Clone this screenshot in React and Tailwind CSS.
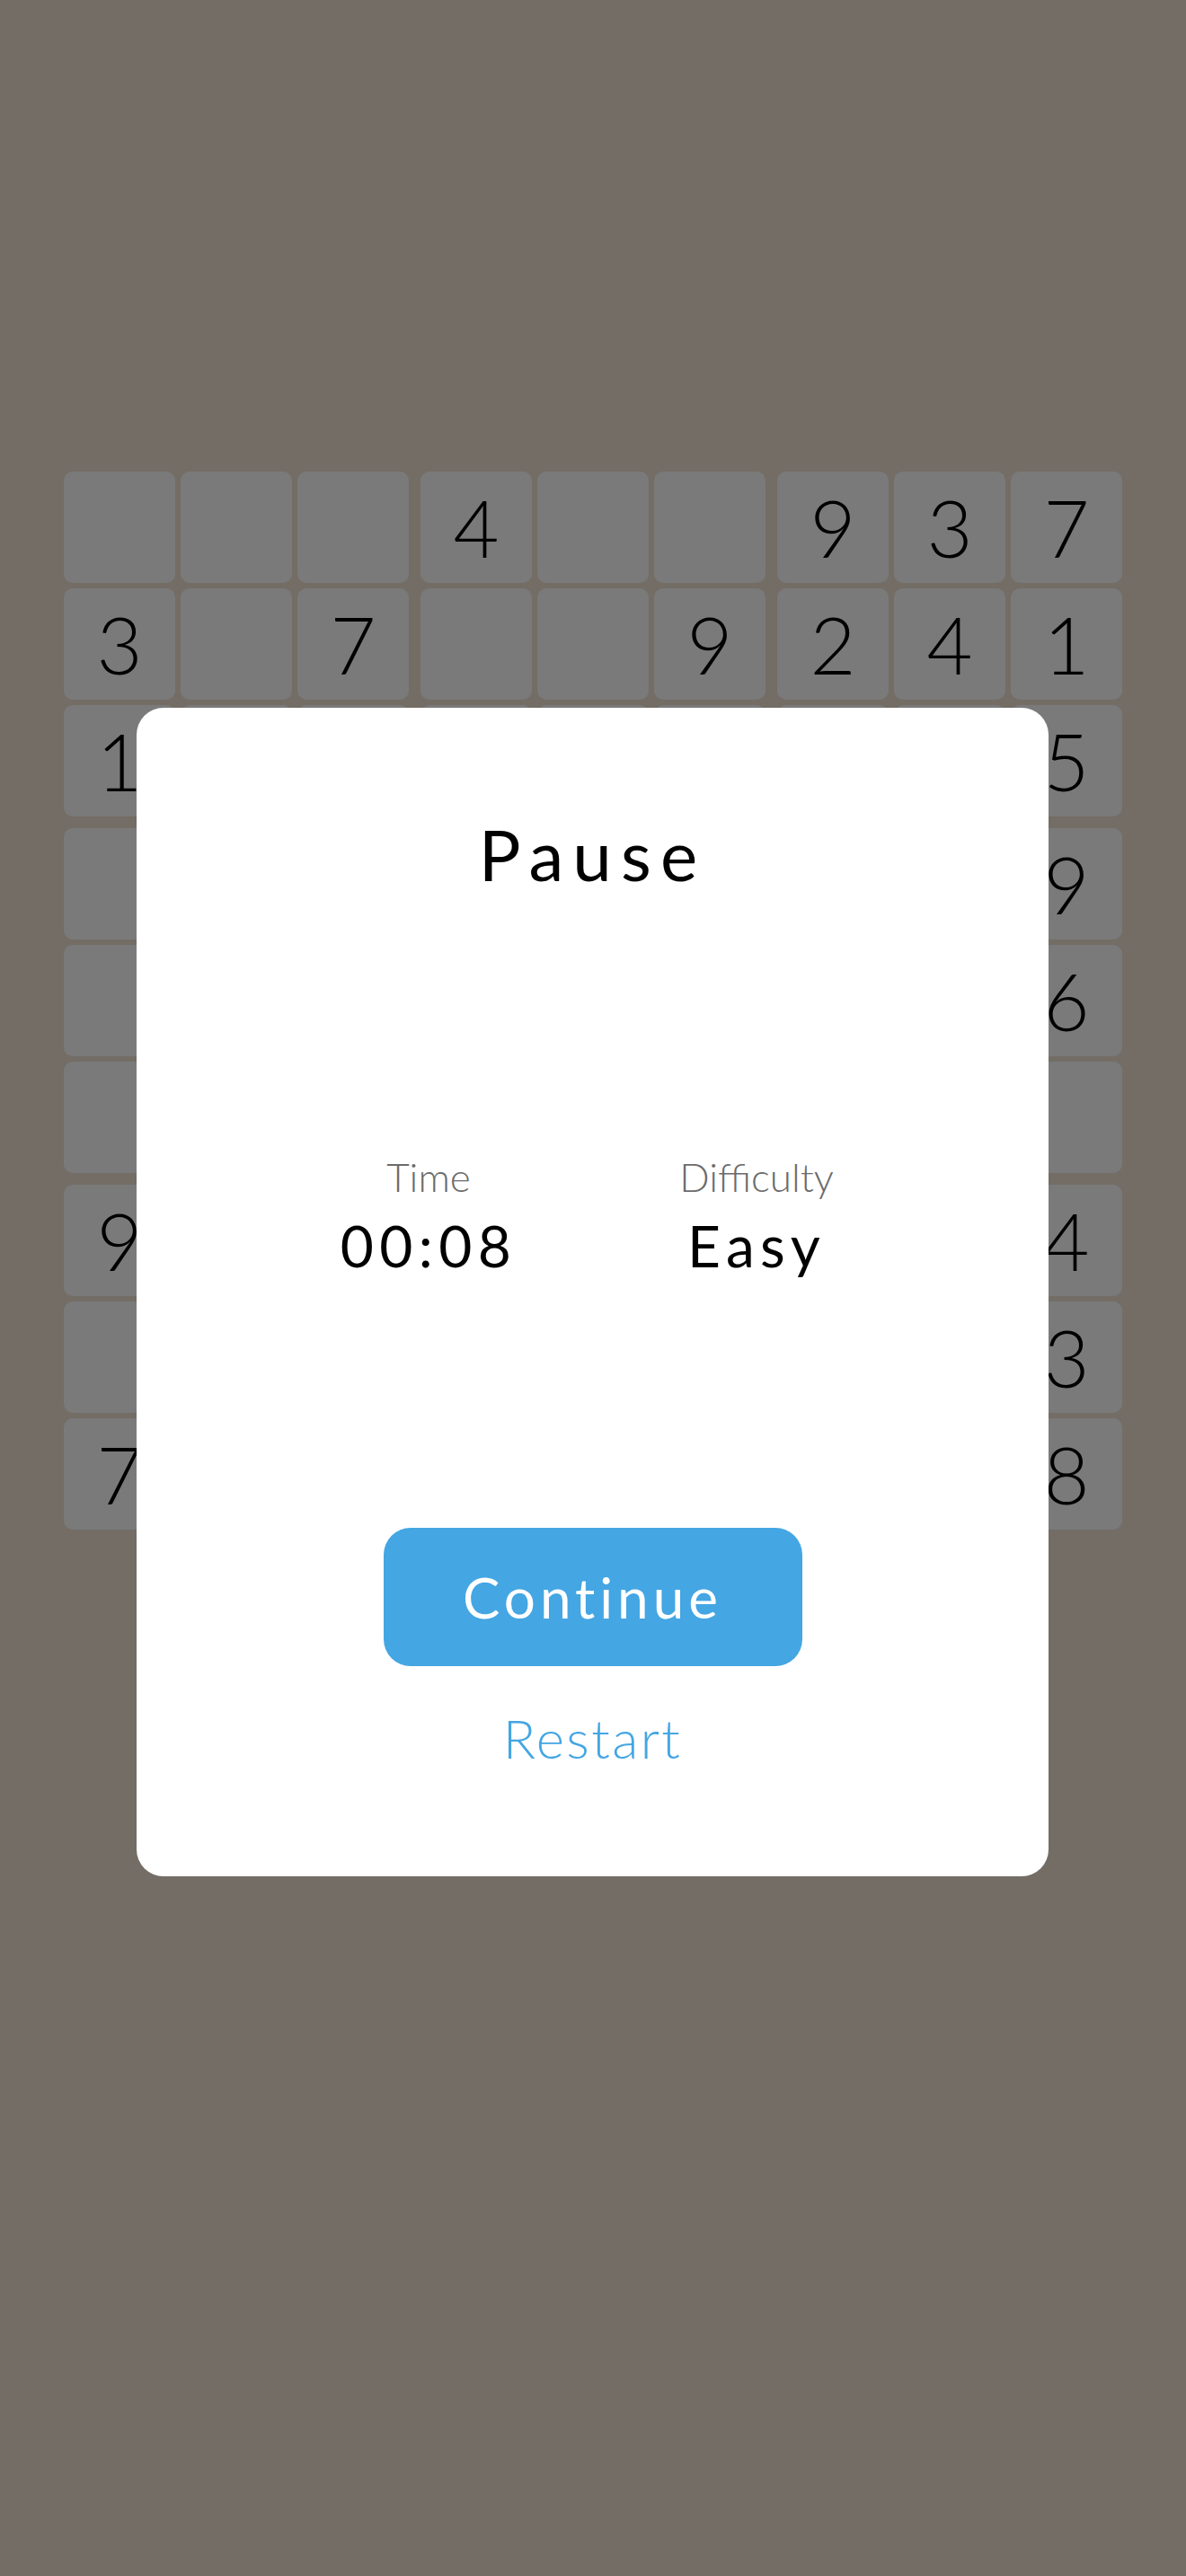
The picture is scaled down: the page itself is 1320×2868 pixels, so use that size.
import React from 'react';

// board as shown behind the pause dialog (0 = empty / hidden under the dialog)
const BOARD = [
  [0, 0, 0, 4, 0, 0, 9, 3, 7],
  [3, 0, 7, 0, 0, 9, 2, 4, 1],
  [1, 0, 0, 0, 0, 0, 0, 0, 5],
  [0, 0, 0, 0, 0, 0, 0, 0, 9],
  [0, 0, 0, 0, 0, 0, 0, 0, 6],
  [0, 0, 0, 0, 0, 0, 0, 0, 0],
  [9, 0, 0, 0, 0, 0, 0, 0, 4],
  [0, 0, 0, 0, 0, 0, 0, 0, 3],
  [7, 0, 0, 0, 0, 0, 0, 0, 8],
];

const font = { fontFamily: 'Lato, "Noto Sans", sans-serif' };

const Cell = ({ value }) => (
  <div className="w-[124px] h-[124px] rounded-[10px] bg-[#7a7a7a] flex items-center justify-center">
    {value ? (
      <span className="text-[88px] leading-none font-light text-black">{value}</span>
    ) : null}
  </div>
);

const Block = ({ br, bc }) => {
  const cells = [];
  for (let r = 0; r < 3; r++) {
    for (let c = 0; c < 3; c++) {
      cells.push(<Cell key={`${r}-${c}`} value={BOARD[br * 3 + r][bc * 3 + c]} />);
    }
  }
  return <div className="grid grid-cols-3 gap-[6px]">{cells}</div>;
};

const Stat = ({ label, value }) => (
  <div className="w-[365px] flex flex-col items-center">
    <span className="text-[44px] leading-none font-light text-[#6b6b6b]">{label}</span>
    <span className="mt-[23px] text-[64px] leading-none text-black tracking-[0.1em]">{value}</span>
  </div>
);

export default function App() {
  const blocks = [];
  for (let br = 0; br < 3; br++) {
    for (let bc = 0; bc < 3; bc++) {
      blocks.push(<Block key={`${br}-${bc}`} br={br} bc={bc} />);
    }
  }

  return (
    <div className="relative w-full min-h-[2868px] bg-[#736d66] overflow-hidden" style={font}>
      <div className="pt-[525px] flex justify-center">
        <div className="grid grid-cols-3 gap-[13px]">{blocks}</div>
      </div>

      {/* pause dialog */}
      <div className="absolute top-[788px] left-[152px] w-[1015px] h-[1301px] rounded-[30px] bg-white flex flex-col items-center pt-[124px]">
        <h1 className="text-[78px] leading-none text-black tracking-[0.13em]">Pause</h1>

        <div className="mt-[298px] flex">
          <Stat label="Time" value="00:08" />
          <Stat label="Difficulty" value="Easy" />
        </div>

        <button className="mt-[282px] w-[466px] h-[154px] rounded-[30px] bg-[#44a6e3] flex items-center justify-center">
          <span className="text-[62px] leading-none text-white tracking-[0.08em]">Continue</span>
        </button>

        <button className="mt-[50px] text-[60px] leading-none font-light text-[#44a6e3] tracking-[0.04em]">
          Restart
        </button>
      </div>
    </div>
  );
}
